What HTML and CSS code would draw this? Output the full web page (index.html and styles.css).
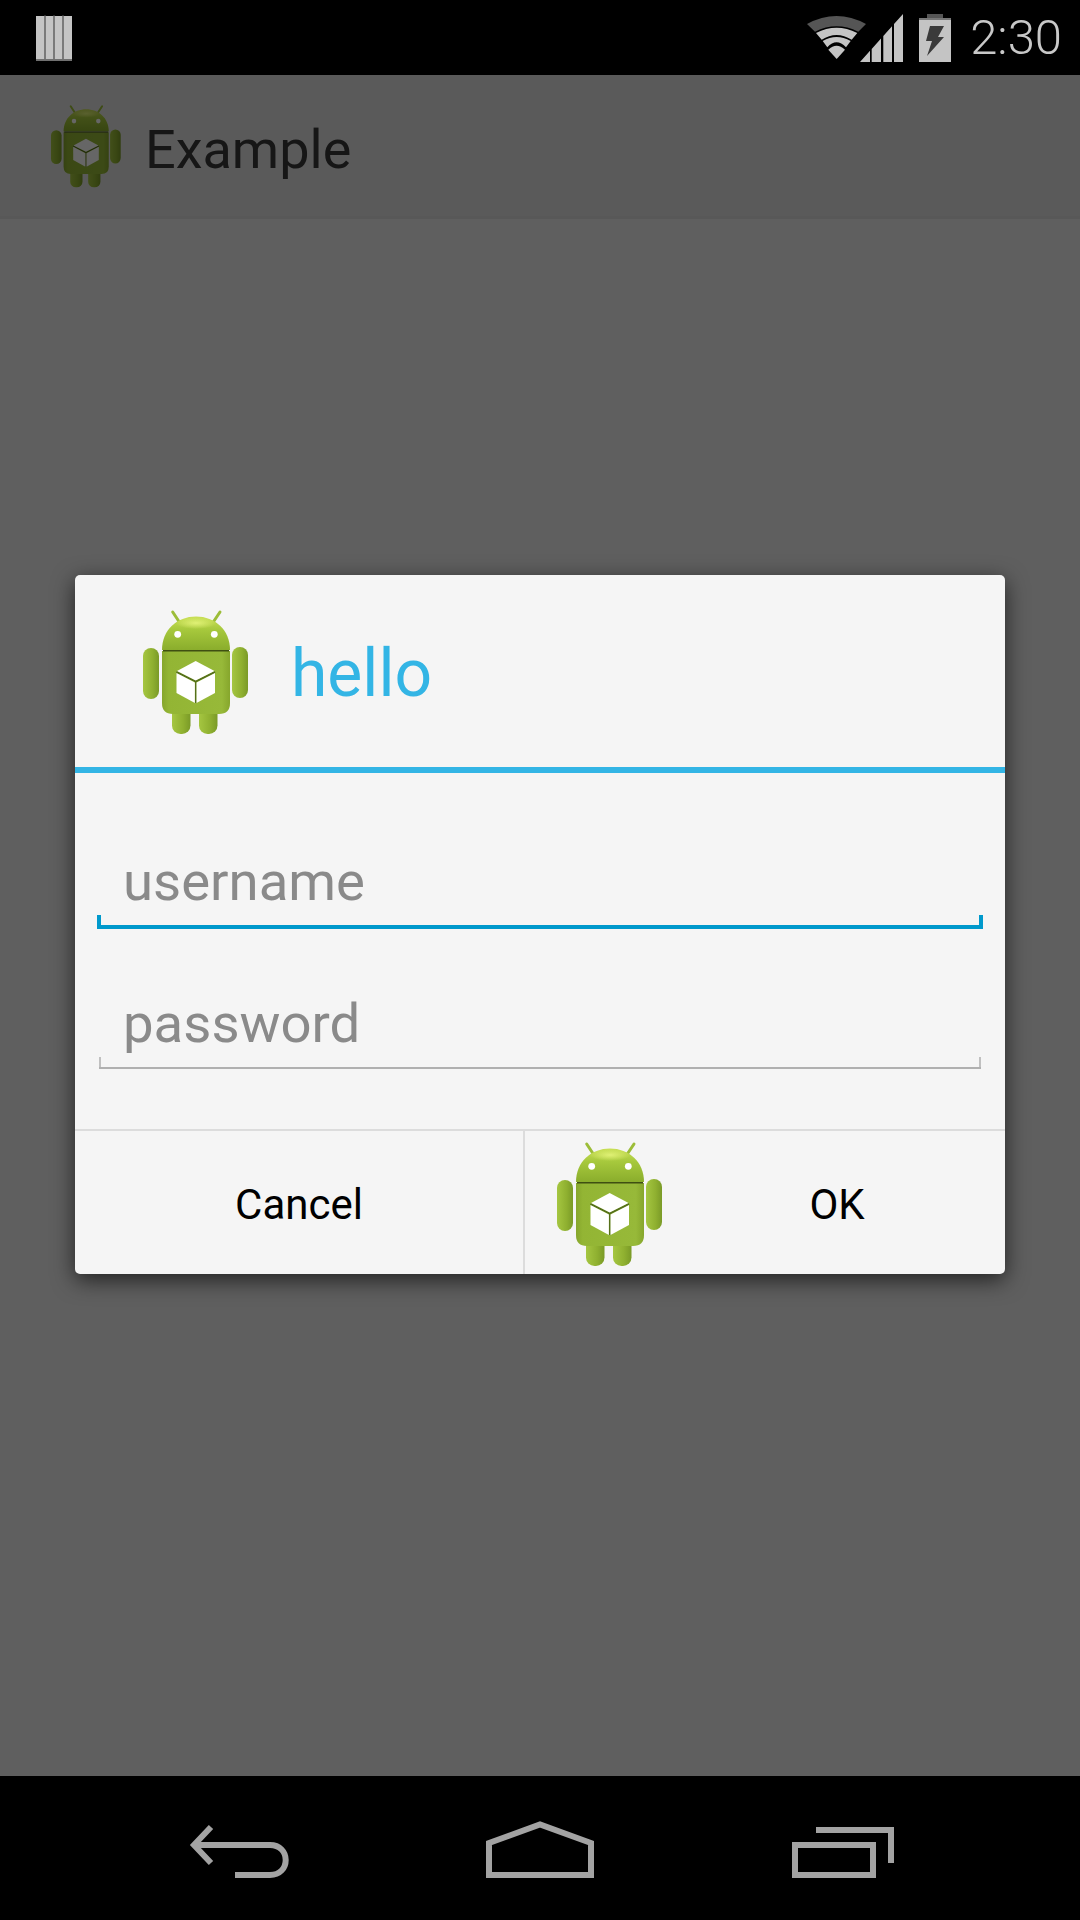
FILE: index.html
```html
<!DOCTYPE html>
<html>
<head>
    <meta name='viewport' content='width=device-width, initial-scale=1'>
    <link rel="stylesheet" href="styles.css">
</head>
<body>
<svg class="defs" width="0" height="0">
    <defs>
        <linearGradient id="headFill" x1="0" y1="0" x2="0" y2="1">
            <stop offset="0" stop-color="#c9df55"/>
            <stop offset="0.4" stop-color="#a6c83c"/>
            <stop offset="1" stop-color="#8aad2c"/>
        </linearGradient>
        <linearGradient id="bodyFill" x1="0" y1="0" x2="1" y2="0">
            <stop offset="0" stop-color="#86a62c"/>
            <stop offset="0.1" stop-color="#93b534"/>
            <stop offset="0.88" stop-color="#97b939"/>
            <stop offset="1" stop-color="#86a62c"/>
        </linearGradient>
        <linearGradient id="limbFill" x1="0" y1="0" x2="1" y2="0">
            <stop offset="0" stop-color="#a5c641"/>
            <stop offset="0.6" stop-color="#8fb030"/>
            <stop offset="1" stop-color="#7a9a27"/>
        </linearGradient>
        <radialGradient id="gloss" cx="0.5" cy="0.5" r="0.5">
            <stop offset="0" stop-color="#e4f47a" stop-opacity="0.9"/>
            <stop offset="1" stop-color="#e4f47a" stop-opacity="0"/>
        </radialGradient>
        <symbol id="droid" viewBox="0 0 130 140">
            <path class="antenna" d="M42.700 11 L49.300 21 M90 11 L83.300 21"/>
            <rect x="42" y="100" width="18.500" height="33" rx="8.500" fill="url(#limbFill)"/>
            <rect x="69" y="100" width="18.500" height="33" rx="8.500" fill="url(#limbFill)"/>
            <rect x="13" y="47" width="16" height="51" rx="8" fill="url(#limbFill)"/>
            <rect x="102" y="46" width="16" height="51" rx="8" fill="url(#limbFill)"/>
            <path d="M32 50 H100 V102 Q100 113 89 113 H43 Q32 113 32 102 Z" fill="url(#bodyFill)"/>
            <path d="M32 49 C32 29 47 15.500 66 15.500 C85 15.500 100 29 100 49 Z" fill="url(#headFill)"/>
            <ellipse cx="66" cy="22" rx="20" ry="6" fill="url(#gloss)"/>
            <path d="M33 49.800 H99" class="neck"/>
            <circle cx="47.700" cy="33.300" r="3.400" fill="#fff"/>
            <circle cx="84.300" cy="33.300" r="3.400" fill="#fff"/>
            <path d="M46.500 71 L65.700 80.500 L85 71 M65.700 80.500 V102" class="cube-line"/>
            <path d="M65.700 60 L84.500 70 L65.700 79.500 L47 70 Z" fill="#fff"/>
            <path d="M46.500 72 L64.900 81.500 V102 L46.500 92 Z" fill="#fff"/>
            <path d="M85 72 L66.500 81.500 V102 L85 92 Z" fill="#fff"/>
        </symbol>
    </defs>
</svg>

<div class="screen">
    <div class="status-bar">
        <svg class="notif" width="36" height="46" viewBox="0 0 36 46">
            <path d="M0 1 H9 V46 H0 Z M9 1 H18 V46 H9 Z M18 1 H27 V46 H18 Z M27 1 H36 V46 H27 Z" fill="#c4c4c4"/>
            <path d="M9 0 V46 M18 0 V46 M27 0 V46" stroke="#4a4a4a" stroke-width="1.200"/>
            <path d="M0 44 H36 V46 H0 Z" fill="#707070"/>
        </svg>
        <div class="status-right">
            <svg width="60" height="44" viewBox="0 0 60 44">
                <path d="M0 8 Q29.500 -8 59 8 L51.300 15.700 Q29.500 4.900 8 15.700 Z" fill="#555"/>
                <path d="M9 17 Q29.500 6.400 50.300 17 L44.700 23.700 Q29.500 14.300 14.700 23.700 Z" fill="#c4c4c4"/>
                <path d="M15.700 25 Q29.500 17 43.700 25 L39 31.300 Q29.500 21.300 20.300 31.300 Z" fill="#c4c4c4"/>
                <path d="M21.300 33.700 Q29.500 25.700 38 33.700 L29.700 43 Z" fill="#c4c4c4"/>
            </svg>
            <svg class="signal" width="43" height="48" viewBox="0 0 43 48">
                <path d="M0 48 L10 36.800 V48 Z M11.700 48 V35 L21 24.600 V48 Z M23.300 48 V22 L32 12.300 V48 Z M34 48 V10 L43 0 V48 Z" fill="#c4c4c4"/>
            </svg>
            <svg class="battery" width="32" height="48" viewBox="0 0 32 48">
                <path d="M8 0 H24 V4 H32 V48 H0 V4 H8 Z" fill="#c4c4c4"/>
                <path d="M8 0 H24 V4 H8 Z" fill="#555"/>
                <path d="M0 4 H32 V6 H0 Z" fill="#777"/>
                <path d="M11 12 H25 L19 23 H25 L8 42 L13 27 H7 Z" fill="#3a3a3a"/>
            </svg>
            <span class="clock">2:30</span>
        </div>
    </div>

    <div class="main">
        <div class="app-bar">
            <svg class="app-icon"><use href="#droid"/></svg>
            <span class="app-title">Example</span>
        </div>
        <div class="dim"></div>
        <div class="content">
            <div class="dialog">
                <div class="dialog-head">
                    <svg class="droid"><use href="#droid"/></svg>
                    <span class="dialog-title">hello</span>
                </div>
                <div class="dialog-body">
                    <input class="field field-focus" type="text" placeholder="username">
                    <input class="field" type="password" placeholder="password">
                </div>
                <div class="dialog-buttons">
                    <div class="btn btn-cancel">Cancel</div>
                    <div class="btn btn-ok">
                        <svg class="droid"><use href="#droid"/></svg>
                        <span class="btn-label">OK</span>
                    </div>
                </div>
            </div>
        </div>
    </div>

    <div class="nav-bar">
        <svg class="nav-icon" width="120" height="80" viewBox="0 0 120 80">
            <path d="M31 17 L14 35 L31 53 M14 35 H90 C100 35 105.700 42 105.700 50 C105.700 58 100 65 90 65 H55" fill="none" stroke="#a3a3a3" stroke-width="6"/>
        </svg>
        <svg class="nav-icon" width="120" height="80" viewBox="0 0 120 80">
            <path d="M9 33 L60 14.500 L111 33 V65 H9 Z" fill="none" stroke="#a3a3a3" stroke-width="6"/>
        </svg>
        <svg class="nav-icon" width="120" height="80" viewBox="0 0 120 80">
            <path d="M15 35 H93 V65 H15 Z M36 20 H111 V53" fill="none" stroke="#a3a3a3" stroke-width="6"/>
        </svg>
    </div>
</div>
</body>
</html>
```

FILE: styles.css
```css
* {
    box-sizing: border-box;
}

html, body {
    margin: 0;
    padding: 0;
    background: #000;
}

.defs {
    position: absolute;
}

.screen {
    width: 1080px;
    height: 1920px;
    display: flex;
    flex-direction: column;
    font-family: 'Roboto', sans-serif;
    overflow: hidden;
}

.status-bar {
    height: 75px;
    background: #000;
    display: flex;
    align-items: center;
    justify-content: space-between;
    padding: 0 18px 0 36px;
}

.status-right {
    display: flex;
    align-items: center;
}

.signal {
    margin-left: -7px;
}

.battery {
    margin-left: 16px;
}

.clock {
    margin-left: 19px;
    font-size: 49px;
    font-weight: 300;
    color: #c8c8c8;
}

.main {
    flex: 1;
    position: relative;
    display: flex;
    flex-direction: column;
    background: #eeeeee;
}

.app-bar {
    height: 144px;
    display: flex;
    align-items: center;
    padding-left: 42px;
    background: #e2e2e2;
    border-bottom: 3px solid #dcdcdc;
}

.app-icon {
    width: 87px;
    height: 93px;
}

.app-title {
    margin-left: 16px;
    padding-top: 7px;
    font-size: 54px;
    color: #383838;
}

.dim {
    position: absolute;
    top: 0;
    left: 0;
    right: 0;
    bottom: 0;
    background: rgba(0, 0, 0, 0.6);
}

.content {
    position: relative;
    flex: 1;
    padding: 356px 75px 0;
}

.dialog {
    height: 699px;
    background: #f5f5f5;
    border-radius: 5px;
    box-shadow: 0 6px 22px rgba(0, 0, 0, 0.65);
    display: flex;
    flex-direction: column;
}

.dialog-head {
    height: 198px;
    display: flex;
    align-items: center;
    padding-left: 55px;
    border-bottom: 6px solid #33b5e5;
}

.droid {
    width: 130px;
    height: 140px;
    flex: none;
}

.antenna {
    fill: none;
    stroke: #9cbd38;
    stroke-width: 3;
    stroke-linecap: round;
}

.neck {
    stroke: #3f4f12;
    stroke-width: 1.500;
}

.cube-line {
    fill: none;
    stroke: #55701a;
    stroke-width: 2;
}

.dialog-title {
    margin-left: 31px;
    padding-top: 5px;
    font-size: 66px;
    color: #33b5e5;
}

.dialog-body {
    flex: 1;
    padding: 0 22px;
}

.field {
    display: block;
    height: 84px;
    width: calc(100% - 4px);
    margin: 56px 0 0 2px;
    padding: 0 24px 8px;
    border: 0;
    outline: 0;
    font-family: inherit;
    font-size: 54.500px;
    background-color: transparent;
    background-repeat: no-repeat;
    background-image: linear-gradient(#b0b0b0, #b0b0b0), linear-gradient(#c0c0c0, #c0c0c0), linear-gradient(#c0c0c0, #c0c0c0);
    background-size: 100% 2px, 2px 12px, 2px 12px;
    background-position: left bottom, left bottom, right bottom;
}

.field::placeholder {
    color: #8a8a8a;
    opacity: 1;
}

.field-focus {
    width: 100%;
    margin: 72px 0 0;
    padding: 0 26px 13px;
    background-image: linear-gradient(#0099cc, #0099cc), linear-gradient(#0099cc, #0099cc), linear-gradient(#0099cc, #0099cc);
    background-size: 100% 4px, 4px 14px, 4px 14px;
}

.dialog-buttons {
    height: 145px;
    display: flex;
    border-top: 2px solid #dcdcdc;
}

.btn {
    display: flex;
    align-items: center;
    font-size: 42px;
    color: #000;
}

.btn-cancel {
    width: 450px;
    padding-top: 4px;
    justify-content: center;
    border-right: 2px solid #dcdcdc;
}

.btn-ok {
    flex: 1;
    padding: 0 5px 0 19px;
}

.btn-label {
    flex: 1;
    padding-top: 4px;
    text-align: center;
}

.nav-bar {
    height: 144px;
    background: #000;
    display: flex;
    justify-content: space-between;
    align-items: flex-start;
    padding: 34px 180px 0;
}
```
